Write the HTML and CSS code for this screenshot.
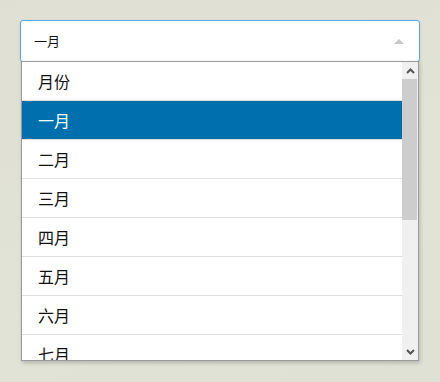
FILE: index.html
```html
<!DOCTYPE html>
<html lang="zh">
<head>
<meta charset="utf-8">
<link rel="stylesheet" href="styles.css">
</head>
<body>
<div class="wrap">
  <div class="select">
    <span class="value">一月</span>
    <span class="caret"></span>
  </div>
  <div class="dropdown">
    <ul class="list">
      <li class="item">月份</li>
      <li class="item selected">一月</li>
      <li class="item">二月</li>
      <li class="item">三月</li>
      <li class="item">四月</li>
      <li class="item">五月</li>
      <li class="item">六月</li>
      <li class="item">七月</li>
    </ul>
    <div class="scrollbar">
      <div class="btn">
        <svg width="9" height="6" viewBox="0 0 9 6"><path d="M1 5 L4.5 1.5 L8 5" fill="none" stroke="#555" stroke-width="2"/></svg>
      </div>
      <div class="thumb"></div>
      <div class="track"></div>
      <div class="btn">
        <svg width="9" height="6" viewBox="0 0 9 6"><path d="M1 1 L4.5 4.5 L8 1" fill="none" stroke="#555" stroke-width="2"/></svg>
      </div>
    </div>
  </div>
</div>
</body>
</html>
```

FILE: styles.css
```css
html, body {
  margin: 0;
  padding: 0;
}
body {
  width: 440px;
  height: 382px;
  overflow: hidden;
  background: linear-gradient(160deg, #dfe0d3 0%, #e2e3d7 60%, #e0e1d5 100%);
  font-family: "Noto Sans CJK SC", "Noto Sans", sans-serif;
  color: #111;
}
.wrap {
  padding: 20px;
}
.select {
  box-sizing: border-box;
  width: 400px;
  height: 42px;
  border: 1px solid #5aaae8;
  border-radius: 3px;
  background: #fff;
  display: flex;
  align-items: center;
  justify-content: space-between;
  padding: 0 15px 0 13px;
  font-size: 13px;
  box-shadow: 0 1px 3px rgba(0,0,0,0.12);
}
.value {
  line-height: 1;
  margin-top: -1px;
}
.caret {
  width: 0;
  height: 0;
  border-left: 5px solid transparent;
  border-right: 5px solid transparent;
  border-bottom: 5px solid #c8c8c8;
  margin-top: 1px;
}
.dropdown {
  box-sizing: border-box;
  width: 398px;
  height: 300px;
  margin: -1px 0 0 1px;
  border: 1px solid #9a9a9a;
  background: #fff;
  display: flex;
  box-shadow: 1px 2px 4px rgba(0,0,0,0.2);
  position: relative;
}
.list {
  list-style: none;
  margin: 0;
  padding: 0;
  width: 380px;
  overflow: hidden;
}
.item {
  box-sizing: border-box;
  height: 39px;
  border-bottom: 1px solid #e0e0e0;
  padding-left: 16px;
  display: flex;
  align-items: center;
  font-size: 16px;
  line-height: 1;
}
.item.selected {
  background: #006fad;
  color: #fff;
  border-bottom-color: #e0e0e0;
}
.scrollbar {
  width: 16px;
  display: flex;
  flex-direction: column;
  background: #f0f0f0;
}
.btn {
  height: 17px;
  display: flex;
  align-items: center;
  justify-content: center;
  flex: none;
}
.thumb {
  height: 141px;
  background: #cdcdcd;
  flex: none;
  margin: 0 1px 0 0;
}
.track {
  flex: 1;
}
```
